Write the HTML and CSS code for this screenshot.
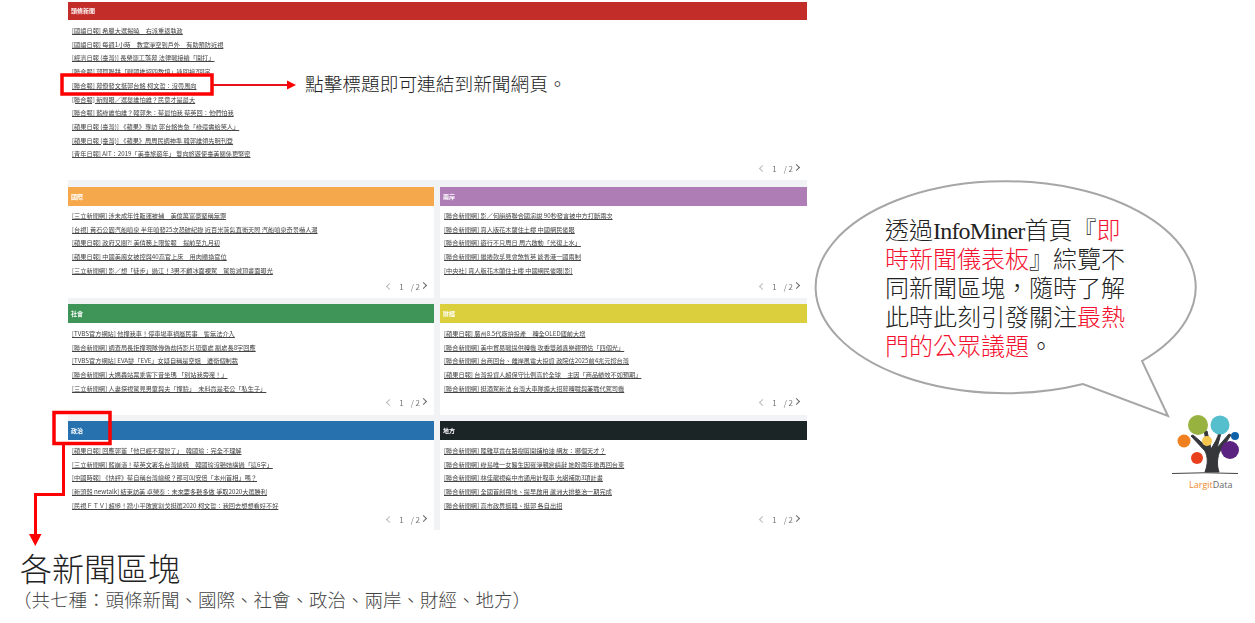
FILE: index.html
```html
<!DOCTYPE html>
<html>
<head>
    <meta charset="utf-8">
    <title>InfoMiner</title>
    <link rel="stylesheet" href="styles.css">
</head>
<body>
    <div class="board">
        <section class="pane pane-top">
            <h2 class="bar red">頭條新聞</h2>
            <ul class="news">
                <li><a href="#">[國語日報] 希臘大選揭曉　右派重返執政</a></li>
                <li><a href="#">[國語日報] 每週1小時　教室淨空到戶外　有助預防近視</a></li>
                <li><a href="#">[經濟日報 (臺灣)] 長榮罷工落幕 法律戰接續「開打」</a></li>
                <li><a href="#">[聯合報] 郭賀聯耕「戰國推招四教填」連回搶?回字</a></li>
                <li><a href="#">[聯合報] 幕僚發文挺郭台銘 柯文哲：沒帶風向</a></li>
                <li><a href="#">[聯合報] 新聞眼／選舉誰怕誰？民意才是最大</a></li>
                <li><a href="#">[聯合報] 藍綠誰怕誰？韓郭朱：蔡最怕我 蔡英回：他們怕我</a></li>
                <li><a href="#">[蘋果日報 (臺灣)] 《蘋果》專訪 郭台銘告急「綠還需給笑人」</a></li>
                <li><a href="#">[蘋果日報 (臺灣)] 《蘋果》周周民調神準 韓郭誰領先明刊登</a></li>
                <li><a href="#">[青年日報] AIT：2019「美臺旅遊年」 雙向旅遊使臺美關係更緊密</a></li>
            </ul>
            <div class="pager"><i class="prev"></i><span class="cur">1</span><span>/ 2</span><i class="next"></i></div>
        </section>

        <div class="grid">
            <section class="pane">
                <h2 class="bar orange">國際</h2>
                <ul class="news">
                    <li><a href="#">[三立新聞網] 涉未成年性販運被捕　美億萬富豪堅稱無罪</a></li>
                    <li><a href="#">[台視] 黃石公園汽船噴泉 半年噴發25次恐破紀錄 近百米蒸氣直衝天際 汽船噴泉奇景嚇人潮</a></li>
                    <li><a href="#">[蘋果日報] 政府又關?! 美債務上限警報　提前至九月初</a></li>
                    <li><a href="#">[蘋果日報] 中國美魔女被控與40高官上床　用肉體換官位</a></li>
                    <li><a href="#">[三立新聞網] 影／想「徒步」過江！3男不顧冰面裸駕　驚險滅頂畫面曝光</a></li>
                </ul>
                <div class="pager"><i class="prev"></i><span class="cur">1</span><span>/ 2</span><i class="next"></i></div>
            </section>
            <section class="pane">
                <h2 class="bar purple">兩岸</h2>
                <ul class="news">
                    <li><a href="#">[聯合新聞網] 影／何韻詩聯合國演說 90秒發言被中方打斷兩次</a></li>
                    <li><a href="#">[聯合新聞網] 真人版花木蘭住土樓 中國網民傻眼</a></li>
                    <li><a href="#">[聯合新聞網] 遊行不只周日 周六啟動「光復上水」</a></li>
                    <li><a href="#">[聯合新聞網] 繼捲款孚見會煞暫英 談香港一國兩制</a></li>
                    <li><a href="#">[中央社] 真人版花木蘭住土樓 中國網民傻眼[影]</a></li>
                </ul>
                <div class="pager"><i class="prev"></i><span class="cur">1</span><span>/ 2</span><i class="next"></i></div>
            </section>
            <section class="pane pane-low">
                <h2 class="bar green">社會</h2>
                <ul class="news">
                    <li><a href="#">[TVBS官方網站] 他撞我車！停車場車禍屬民事　警無法介入</a></li>
                    <li><a href="#">[聯合新聞網] 調查局長拒撞現隊傳偽劫持影片恐懲處 副處長8字回應</a></li>
                    <li><a href="#">[TVBS官方網站] EVA變「EVE」女疑自稱是空姐　遭衛個制裁</a></li>
                    <li><a href="#">[聯合新聞網] 大媽轟站票乘客下昔坐瑪 「別站我旁邊！」</a></li>
                    <li><a href="#">[三立新聞網] 人妻探視驚見男童與夫「撞臉」　未料竟是老公「私生子」</a></li>
                </ul>
                <div class="pager"><i class="prev"></i><span class="cur">1</span><span>/ 2</span><i class="next"></i></div>
            </section>
            <section class="pane pane-low">
                <h2 class="bar yellow">財經</h2>
                <ul class="news">
                    <li><a href="#">[蘋果日報] 廣州8.5代廠拚投產　轉全OLED廬前大增</a></li>
                    <li><a href="#">[聯合新聞網] 美中貿易戰提供轉機 攻委雙越鑫樂觀預估「四個光」</a></li>
                    <li><a href="#">[聯合新聞網] 台商回台、離岸風電大投資 政院估2025前4兆元撐台灣</a></li>
                    <li><a href="#">[蘋果日報] 台灣投資人超保守比例高於全球　主因「商品績效不如預期」</a></li>
                    <li><a href="#">[聯合新聞網] 挺酒駕新法 台灣大車隊擴大招募轉職與兼職代駕司機</a></li>
                </ul>
                <div class="pager"><i class="prev"></i><span class="cur">1</span><span>/ 2</span><i class="next"></i></div>
            </section>
            <section class="pane pane-low pane-last">
                <h2 class="bar blue">政治</h2>
                <ul class="news">
                    <li><a href="#">[蘋果日報] 回應郭董「他已經不理智了」　韓國瑜：完全不理解</a></li>
                    <li><a href="#">[三立新聞網] 藍崩潰！蔡英文署名台灣總統　韓國瑜沒聽她講過「這6字」</a></li>
                    <li><a href="#">[中國時報] 《快評》蔡自稱台灣總統？那可叫安倍「本州首相」嗎？</a></li>
                    <li><a href="#">[新頭殼 newtalk] 結束訪美 卓榮泰：未來要多聽多做 爭取2020大選勝利</a></li>
                    <li><a href="#">[民視ＦＴＶ] 超慘！蹭小平敗翼割戈挺選2020 柯文哲：我回去想想看好不好</a></li>
                </ul>
                <div class="pager"><i class="prev"></i><span class="cur">1</span><span>/ 2</span><i class="next"></i></div>
            </section>
            <section class="pane pane-low pane-last">
                <h2 class="bar black">地方</h2>
                <ul class="news">
                    <li><a href="#">[聯合新聞網] 陸雜草竟在路樹剪開鋪柏油 網友：哪個天才？</a></li>
                    <li><a href="#">[聯合新聞網] 綠島唯一女醫生因罹淨親倉請辭 她盼兩年後再回台東</a></li>
                    <li><a href="#">[聯合新聞網] 林佳龍視察中市通用計程車 允諾補助3項計畫</a></li>
                    <li><a href="#">[聯合新聞網] 全國首創飛地、提早啟用 蘆洲大排整治一期完成</a></li>
                    <li><a href="#">[聯合新聞網] 高市政界挺韓、挺郭 各自出招</a></li>
                </ul>
                <div class="pager"><i class="prev"></i><span class="cur">1</span><span>/ 2</span><i class="next"></i></div>
            </section>
        </div>
    </div>

    <!-- notes drawn over the screenshot -->
    <svg class="marks" width="1255" height="623" viewBox="0 0 1255 623">
        <rect class="box" x="62" y="75" width="150" height="19"/>
        <path class="line-thin" d="M213 85H288"/>
        <path class="head" d="M287 80.500L296 85L287 89.500Z"/>
        <rect class="box" x="54" y="412.500" width="56" height="31"/>
        <path class="line-red" d="M63.500 445V494.500H35.500V535"/>
        <path class="head" d="M29 534H41.500L35.300 546Z"/>
        <path class="bubble" d="M1142 361A190 106 0 1 0 1083 384L1168 416Z"/>

        <path class="tree" d="M1205 472C1208 464 1208 457 1205 451L1191 436L1193 435L1207 447C1206 441 1205 435 1204 431L1207 431L1211 449C1214 444 1218 438 1219 432L1221 433L1217 448L1229 434L1231 435L1219 453C1217 460 1217 466 1219 472Z"/>
        <circle cx="1198" cy="425" r="10" fill="#97b23f"/>
        <circle cx="1220" cy="425" r="9.500" fill="#55bfce"/>
        <circle cx="1184" cy="441" r="6.500" fill="#f0801f"/>
        <circle cx="1207" cy="441" r="5" fill="#f5c64d"/>
        <circle cx="1235" cy="436" r="4" fill="#0f62a8"/>
        <circle cx="1230" cy="450" r="9" fill="#5c2280"/>
        <circle cx="1197" cy="458" r="6" fill="#e8401c"/>
        <path class="ground" d="M1172 473.500Q1205 472 1238 473.500"/>
    </svg>

    <p class="note-link">點擊標題即可連結到新聞網頁。</p>
    <div class="note-bubble">
        <p>透過<span class="brand">InfoMiner</span>首頁『<em>即</em></p>
        <p><em>時新聞儀表板</em>』綜覽不</p>
        <p>同新聞區塊，隨時了解</p>
        <p>此時此刻引發關注<em>最熱</em></p>
        <p><em>門的公眾議題</em>。</p>
    </div>
    <p class="logo-name"><b>Largit</b>Data</p>
    <div class="note-kinds">
        <p class="kinds-title">各新聞區塊</p>
        <p class="kinds-list">（共七種：頭條新聞、國際、社會、政治、兩岸、財經、地方）</p>
    </div>
</body>
</html>
```

FILE: styles.css
```css
body {
    margin: 0;
    background: #fff;
    font-family: "Liberation Serif", "Noto Sans CJK TC", serif;
    color: #222;
    height: 623px;
    overflow: hidden;
}

.board {
    width: 739px;
    margin-left: 68px;
    padding-top: 2px;
    background: linear-gradient(#fff 2px, #f1f3f5 2px);
    font-family: "Noto Sans CJK TC", sans-serif;
    filter: blur(.3px);
}

.pane {
    background: #fff;
    height: 111px;
}
.pane-top {
    height: 178px;
}
.pane-last {
    height: 109px;
}

.grid {
    display: grid;
    grid-template-columns: 366px 367px;
    column-gap: 6px;
    row-gap: 6px;
    padding-top: 7px;
}

.bar {
    margin: 0;
    height: 19px;
    line-height: 19px;
    padding-left: 3px;
    font-size: 6px;
    font-weight: 700;
    color: #fff;
}
.pane-top .bar {
    height: 18px;
    line-height: 18px;
}
.red { background: #c22c29; }
.orange { background: #f6a84d; }
.purple { background: #ae7db6; }
.green { background: #3f9558; }
.yellow { background: #dbcf3d; }
.blue { background: #2772ae; }
.black { background: #1c2526; }

.news {
    list-style: none;
    margin: 0;
    padding: 3px 0 0 4px;
    font-size: 6.2px;
    line-height: 13.7px;
}
.pane-top .news, .pane-low .news {
    padding-top: 4px;
}
.news a {
    color: #444;
}

.pager {
    display: flex;
    justify-content: flex-end;
    align-items: center;
    height: 12px;
    padding-right: 8px;
    margin-top: 3px;
    font-size: 8px;
    color: #777;
}
.pane-top .pager {
    margin-top: 1px;
}
.pane-low .pager {
    margin-top: .5px;
}
.cur {
    margin: 0 7px 0 7px;
}
.prev, .next {
    display: block;
    width: 4px;
    height: 4px;
    border-left: 1px solid #bbb;
    border-bottom: 1px solid #bbb;
    transform: rotate(45deg);
}
.next {
    transform: rotate(225deg);
    border-color: #666;
    margin: 0 0 2px 1px;
}

.marks {
    position: absolute;
    left: 0;
    top: 0;
}
.box {
    fill: none;
    stroke: #f00;
    stroke-width: 3.5;
}
.line-thin {
    fill: none;
    stroke: #e8101a;
    stroke-width: 2;
}
.line-red {
    fill: none;
    stroke: #f00;
    stroke-width: 3;
}
.head {
    fill: #f00;
}
.bubble {
    fill: #fff;
    stroke: #a6a6a6;
    stroke-width: 2;
}
.tree {
    fill: #34363a;
    stroke: #34363a;
    stroke-width: 1;
}
.ground {
    fill: none;
    stroke: #444;
    stroke-width: 1;
}

.note-link, .note-bubble, .logo-name, .note-kinds {
    position: absolute;
    margin: 0;
}
.note-link {
    left: 305px;
    top: 73px;
    font-size: 18.7px;
    line-height: 24px;
    font-weight: 300;
}
.note-bubble {
    left: 885px;
    top: 217px;
    font-size: 24px;
    line-height: 29px;
    font-weight: 300;
    white-space: nowrap;
}
.note-bubble p {
    margin: 0;
}
.note-bubble em {
    font-style: normal;
    color: #f4112f;
}
.brand {
    letter-spacing: -.8px;
}
.logo-name {
    left: 1189px;
    top: 479px;
    font-family: "Open Sans", sans-serif;
    font-size: 9px;
    line-height: 12px;
    color: #666;
}
.logo-name b {
    font-weight: 400;
    color: #ef8a2c;
}
.note-kinds {
    left: 20px;
    top: 552px;
}
.kinds-title {
    margin: 0;
    font-size: 32px;
    line-height: 37px;
    font-weight: 300;
}
.kinds-list {
    margin: 0 0 0 -7px;
    font-size: 18.5px;
    line-height: 24px;
    font-weight: 300;
    color: #444;
    white-space: nowrap;
}
```
